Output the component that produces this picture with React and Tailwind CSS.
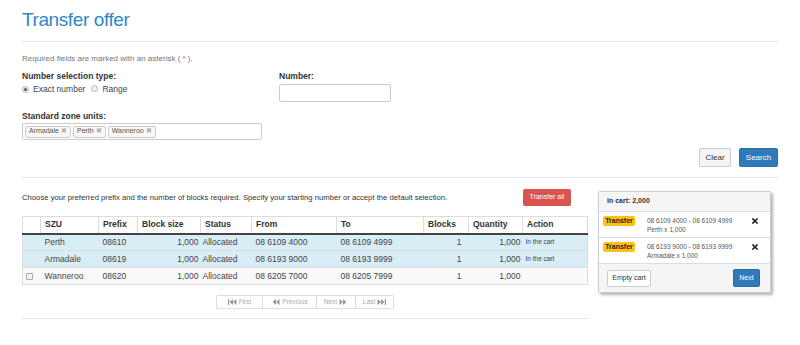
import React from 'react';

const rows = [
  { szu: 'Perth', prefix: '08610', size: '1,000', status: 'Allocated', from: '08 6109 4000', to: '08 6109 4999', blocks: '1', qty: '1,000', action: 'In the cart', sel: true },
  { szu: 'Armadale', prefix: '08619', size: '1,000', status: 'Allocated', from: '08 6193 9000', to: '08 6193 9999', blocks: '1', qty: '1,000', action: 'In the cart', sel: true },
  { szu: 'Wanneroo', prefix: '08620', size: '1,000', status: 'Allocated', from: '08 6205 7000', to: '08 6205 7999', blocks: '1', qty: '1,000', action: '', sel: false },
];

const Radio = ({ checked }) => (
  <span className="inline-flex w-[7px] h-[7px] rounded-full border border-[#b5b5b5] bg-[#f0f0f0] items-center justify-center">
    {checked && <span className="w-[3px] h-[3px] rounded-full bg-[#555]" />}
  </span>
);

const Tag = ({ label }) => (
  <span className="flex items-center h-[12px] px-[3px] border border-[#ccc] bg-[#f7f7f7] rounded-[2px] text-[7px] text-[#555] gap-[2px]">
    {label}
    <span className="text-[#aaa] text-[7px]">✖</span>
  </span>
);

const Tri = ({ dir, bar }) => (
  <svg width="9" height="6" viewBox="0 0 9 6" className="fill-[#999]">
    {dir === 'left' ? (
      <>
        {bar && <rect x="0" y="0" width="1.2" height="6" />}
        <polygon points="1.5,3 5,0 5,6" />
        <polygon points="5,3 8.5,0 8.5,6" />
      </>
    ) : (
      <>
        <polygon points="0.5,0 4,3 0.5,6" />
        <polygon points="4,0 7.5,3 4,6" />
        {bar && <rect x="7.8" y="0" width="1.2" height="6" />}
      </>
    )}
  </svg>
);

const Cross = () => (
  <svg width="6" height="6" viewBox="0 0 6 6">
    <path d="M1 1 L5 5 M5 1 L1 5" stroke="#222" strokeWidth="1.6" strokeLinecap="square" />
  </svg>
);

export default function App() {
  const th = 'text-left font-bold text-[8.5px] text-[#333] px-[4px] border-l border-[#ddd] border-b-2 border-b-[#444]';
  const td = 'px-[4px] text-[#444] border-t border-[#ddd]';
  return (
    <div className="w-[800px] h-[345px] bg-white px-[22px] text-[#333] overflow-hidden" style={{ fontFamily: '"Liberation Sans", Arial, sans-serif' }}>
      <div className="h-[42px] border-b border-[#e5e5e5] pt-[8px]">
        <h1 className="text-[19px] leading-[24px] text-[#2f86c9] tracking-[-0.4px]">Transfer offer</h1>
      </div>

      <div className="pt-[12px] text-[8px] leading-[10px] text-[#777]">
        Required fields are marked with an asterisk ( <span className="text-[#d9534f]">*</span> ).
      </div>

      <div className="flex mt-[7px]">
        <div className="w-[257px]">
          <div className="text-[8.5px] font-bold leading-[10px] text-[#333]">Number selection type:</div>
          <div className="flex items-center mt-[3px] text-[8.5px] text-[#444] leading-[10px]">
            <Radio checked />
            <span className="ml-[4px]">Exact number</span>
            <span className="ml-[6px]"><Radio /></span>
            <span className="ml-[4px]">Range</span>
          </div>
        </div>
        <div>
          <div className="text-[8.5px] font-bold leading-[10px] text-[#333]">Number:</div>
          <div className="mt-[3px] w-[112px] h-[18px] border border-[#ccc] rounded-[2px]" />
        </div>
      </div>

      <div className="mt-[9px] text-[8.5px] font-bold leading-[10px] text-[#333]">Standard zone units:</div>
      <div className="mt-[2px] w-[240px] h-[17px] border border-[#ccc] rounded-[2px] flex items-center gap-[2px] px-[2px]">
        <Tag label="Armadale" />
        <Tag label="Perth" />
        <Tag label="Wanneroo" />
      </div>

      <div className="flex justify-end gap-[8px] mt-[8px] h-[30px] border-b border-[#e5e5e5]">
        <button className="h-[19px] w-[32px] border border-[#ccc] bg-[#f5f5f5] rounded-[2px] text-[8px] text-[#333]">Clear</button>
        <button className="h-[19px] w-[39px] bg-[#2f7ab8] border border-[#2a6ea6] rounded-[2px] text-[8px] text-white">Search</button>
      </div>

      <div className="flex mt-[11px]">
        <div className="w-[566px]">
          <div className="flex items-center h-[17px]">
            <span className="text-[7.7px] text-[#333]">Choose your preferred prefix and the number of blocks required. Specify your starting number or accept the default selection.</span>
            <button className="ml-auto mr-[17px] w-[48px] h-[17px] bg-[#d9534f] rounded-[2px] text-[7px] text-white">Transfer all</button>
          </div>
          <table className="mt-[10px] w-full border-collapse border border-[#ddd]">
            <thead>
              <tr className="h-[17px]">
                <th className="border-b-2 border-b-[#444] w-[18px]" />
                <th className={th + ' w-[58px]'}>SZU</th>
                <th className={th + ' w-[39px]'}>Prefix</th>
                <th className={th + ' w-[63px]'}>Block size</th>
                <th className={th + ' w-[51px]'}>Status</th>
                <th className={th + ' w-[85px]'}>From</th>
                <th className={th + ' w-[87px]'}>To</th>
                <th className={th + ' w-[45px]'}>Blocks</th>
                <th className={th + ' w-[54px]'}>Quantity</th>
                <th className={th}>Action</th>
              </tr>
            </thead>
            <tbody>
              {rows.map((r) => (
                <tr key={r.szu} className={'h-[17px] text-[8.5px] ' + (r.sel ? 'bg-[#d9edf7]' : 'bg-[#f9f9f9]')}>
                  <td className={td + ' pl-[3px]'}>
                    {!r.sel && <span className="block w-[7px] h-[7px] border border-[#aaa] rounded-[1px] bg-[#f3f3f3]" />}
                  </td>
                  <td className={td}>{r.szu}</td>
                  <td className={td}>{r.prefix}</td>
                  <td className={td + ' text-right pr-[2px]'}>{r.size}</td>
                  <td className={td + ' pl-[2px]'}>{r.status}</td>
                  <td className={td}>{r.from}</td>
                  <td className={td}>{r.to}</td>
                  <td className={td + ' text-right pr-[7px]'}>{r.blocks}</td>
                  <td className={td + ' text-right pr-[2px]'}>{r.qty}</td>
                  <td className="pl-[3px] border-t border-[#ddd] text-[6.5px] text-[#444]">{r.action}</td>
                </tr>
              ))}
            </tbody>
          </table>
          <div className="flex justify-center mt-[10px]">
            <div className="flex h-[14px] border border-[#ddd] rounded-[2px] text-[6.5px] text-[#aaa]">
              <span className="w-[45px] flex items-center justify-center gap-[2px]"><Tri dir="left" bar /> First</span>
              <span className="w-[54px] flex items-center justify-center gap-[2px] border-l border-[#ddd]"><Tri dir="left" /> Previous</span>
              <span className="w-[39px] flex items-center justify-center gap-[2px] border-l border-[#ddd]">Next <Tri dir="right" /></span>
              <span className="w-[38px] flex items-center justify-center gap-[2px] border-l border-[#ddd]">Last <Tri dir="right" bar /></span>
            </div>
          </div>
          <div className="mt-[9px] border-b border-[#e5e5e5]" />
        </div>

        <div className="ml-[10px] mt-[2px] w-[173px] h-[102px] border border-[#ccc] rounded-[2px] shadow-[2px_2px_3px_rgba(0,0,0,0.3)] flex flex-col">
          <div className="h-[20px] bg-[#f5f5f5] border-b border-[#ddd] px-[8px] flex items-center text-[7px] font-bold text-[#333]">In cart: 2,000</div>
          {[
            ['08 6109 4000 - 08 6109 4999', 'Perth x 1,000'],
            ['08 6193 9000 - 08 6193 9999', 'Armadale x 1,000'],
          ].map(([a, b]) => (
            <div key={a} className="h-[26px] border-b border-[#ddd] flex items-start pt-[4px] pl-[4px] pr-[12px]">
              <span className="w-[32px] h-[10px] bg-[#fdc114] rounded-[2px] text-[7px] font-bold text-[#222] flex items-center justify-center">Transfer</span>
              <div className="ml-[12px] text-[6.5px] leading-[9px] text-[#555]">
                <div>{a}</div>
                <div>{b}</div>
              </div>
              <span className="ml-auto mt-[2px]"><Cross /></span>
            </div>
          ))}
          <div className="flex-1 bg-[#f5f5f5] flex items-center justify-between px-[8px] pr-[10px]">
            <button className="h-[17px] w-[44px] border border-[#ccc] bg-white rounded-[2px] text-[7px] text-[#333]">Empty cart</button>
            <button className="h-[18px] w-[27px] bg-[#2f7ab8] border border-[#2a6ea6] rounded-[2px] text-[7px] text-white">Next</button>
          </div>
        </div>
      </div>
    </div>
  );
}
